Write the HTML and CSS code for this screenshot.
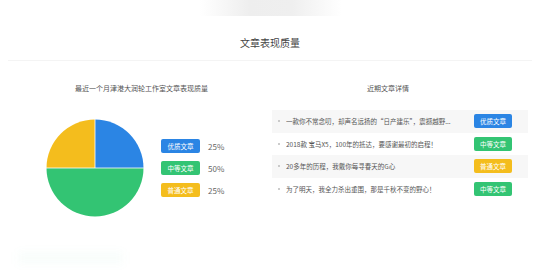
FILE: index.html
```html
<!DOCTYPE html>
<html lang="zh-CN">
<head>
    <meta charset="UTF-8">
    <title>文章表现质量</title>
    <link rel="stylesheet" href="styles.css">
</head>
<body>
    <div class="top-fade"></div>
    <h2 class="title">文章表现质量</h2>
    <div class="divider"></div>

    <div class="panels">
        <div class="panel-left">
            <p class="subtitle">最近一个月津港大润轮工作室文章表现质量</p>
            <div class="chart">
                <svg class="pie" width="98" height="98" viewBox="0 0 98 98">
                    <path d="M49 49 L49 0.5 A48.5 48.5 0 0 1 97.5 49 Z" fill="#2b85e4"/>
                    <path d="M49 49 L97.5 49 A48.5 48.5 0 0 1 0.5 49 Z" fill="#33c473"/>
                    <path d="M49 49 L0.5 49 A48.5 48.5 0 0 1 49 0.5 Z" fill="#f4bd1d"/>
                    <line x1="49" y1="0" x2="49" y2="49" stroke="#fff" stroke-width="0.8"/>
                    <line x1="0" y1="49" x2="98" y2="49" stroke="#fff" stroke-width="0.8"/>
                </svg>
                <div class="legend">
                    <div class="legend-row"><span class="tag blue">优质文章</span><span class="pct">25%</span></div>
                    <div class="legend-row"><span class="tag green">中等文章</span><span class="pct">50%</span></div>
                    <div class="legend-row"><span class="tag yellow">普通文章</span><span class="pct">25%</span></div>
                </div>
            </div>
            <div class="glow"></div>
        </div>

        <div class="panel-right">
            <p class="subtitle right">近期文章详情</p>
            <ul class="list">
                <li class="item gray"><span class="dot"></span><span class="text">一款你不常念叨，却声名远扬的“日产建乐”，震撼越野...</span><span class="tag blue">优质文章</span></li>
                <li class="item"><span class="dot"></span><span class="text">2018款 宝马X5，100年的抵达，要感谢最初的启程！</span><span class="tag green">中等文章</span></li>
                <li class="item gray"><span class="dot"></span><span class="text">20多年的历程，我戴你每寻春天的G心</span><span class="tag yellow">普通文章</span></li>
                <li class="item"><span class="dot"></span><span class="text">为了明天，我全力杀出重围，那是千秋不变的野心！</span><span class="tag green">中等文章</span></li>
            </ul>
        </div>
    </div>
</body>
</html>
```

FILE: styles.css
```css
body {
    margin: 0;
    padding: 0;
    background: #fff;
    font-family: "Noto Sans CJK SC", "Noto Sans", sans-serif;
    color: #333;
    width: 540px;
    height: 270px;
    overflow: hidden;
}
.top-fade {
    width: 142px;
    height: 16px;
    margin: 0 auto 0 200px;
    background: linear-gradient(to right, rgba(238,238,238,0), #eeeeee 35%, #efefef 65%, rgba(238,238,238,0));
}
.title {
    margin: 20px 0 0 0;
    font-size: 10px;
    line-height: 14px;
    font-weight: normal;
    text-align: center;
    color: #444;
}
.divider {
    margin: 10px 8px 0 8px;
    height: 1px;
    background: #f4f4f4;
}
.panels {
    display: flex;
}
.panel-left {
    width: 283px;
}
.panel-right {
    width: 256px;
    margin-left: -11px;
}
.subtitle {
    margin: 22px 0 0 0;
    font-size: 7px;
    line-height: 10px;
    color: #555;
    text-align: center;
}
.subtitle.right {
    padding-right: 24px;
}
.chart {
    display: flex;
    align-items: center;
    margin-top: 26px;
    padding-left: 46px;
}
.pie {
    display: block;
}
.legend {
    margin-left: 17px;
    display: flex;
    flex-direction: column;
    gap: 8px;
}
.legend-row {
    display: flex;
    align-items: center;
}
.tag {
    display: inline-block;
    width: 39px;
    height: 14px;
    line-height: 14px;
    border-radius: 2px;
    color: #fff;
    font-size: 6.5px;
    text-align: center;
    flex-shrink: 0;
}
.blue { background: #2b85e4; }
.green { background: #33c473; }
.yellow { background: #f4bd1d; }
.pct {
    margin-left: 8px;
    font-size: 8px;
    color: #666;
}
.glow {
    margin: 35px 0 0 18px;
    width: 105px;
    height: 12px;
    background: rgba(60, 200, 140, 0.035);
    filter: blur(4px);
}
.list {
    list-style: none;
    margin: 17px 0 0 0;
    padding: 0;
}
.item {
    display: flex;
    align-items: center;
    height: 22.5px;
    padding: 0 16px 0 6px;
}
.item.gray {
    background: #f7f7f7;
}
.dot {
    width: 2px;
    height: 2px;
    border-radius: 50%;
    background: #bbb;
    margin-right: 6px;
    flex-shrink: 0;
}
.text {
    flex: 1;
    font-size: 6.5px;
    color: #555;
    white-space: nowrap;
    overflow: hidden;
}
.item .tag {
    width: 38px;
}
```
